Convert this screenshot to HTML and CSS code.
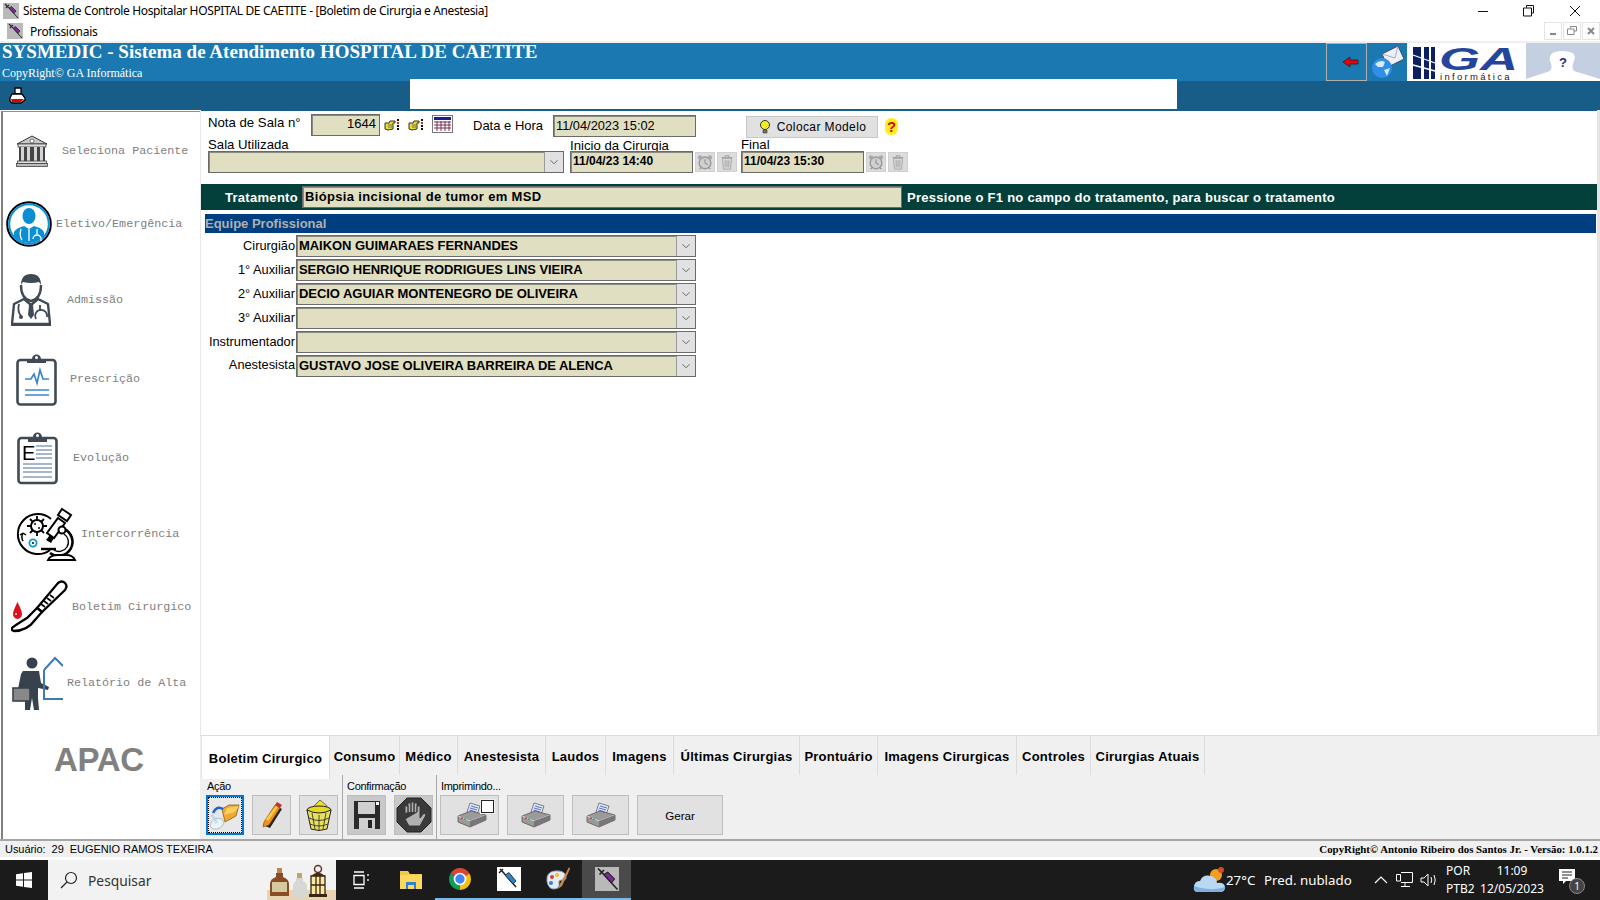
FILE: index.html
```html
<!DOCTYPE html>
<html lang="pt-BR">
<head>
<meta charset="utf-8">
<title>Sistema de Controle Hospitalar</title>
<link rel="stylesheet" href="styles.css">
</head>
<body>
<svg class="sprite" width="0" height="0">
  <defs>
    <symbol id="syringe" viewBox="0 0 16 16">
      <rect width="16" height="16" fill="#b9b9b9"/>
      <path d="M2 1 L5 4 M3 5 L6 2" stroke="#222" stroke-width="1.100" fill="none"/>
      <path d="M4 3 L15 15" stroke="#222" stroke-width="1"/>
      <path d="M6 5 L8.500 3.500 L13 8 L11 10.500 Z" fill="#7a2a8c" stroke="#222" stroke-width=".7"/>
    </symbol>
    <symbol id="hand" viewBox="0 0 17 14">
      <path d="M1 5 L5 5 L6 3 L11 3 L11 5 L9 5 L9 11 L4 12 L1 11 Z" fill="#e8dc30" stroke="#333" stroke-width="1"/>
      <path d="M4 7 H8 M4 9 H8" stroke="#555" stroke-width=".8"/>
      <rect x="13" y="1" width="2" height="2" fill="#111"/><rect x="13" y="4" width="2" height="2" fill="#d22"/>
      <rect x="13" y="7" width="2" height="2" fill="#111"/><rect x="13" y="10" width="2" height="2" fill="#111"/>
    </symbol>
    <symbol id="clock" viewBox="0 0 20 20">
      <circle cx="10" cy="11" r="6.500" fill="#d0d0d0" stroke="#9a9a9a" stroke-width="1.600"/>
      <circle cx="4.500" cy="5" r="2.400" fill="#a8a8a8"/><circle cx="15.500" cy="5" r="2.400" fill="#a8a8a8"/>
      <path d="M10 7 V11 L13 13 M4 18 L6 16 M16 18 L14 16" stroke="#8f8f8f" stroke-width="1.200" fill="none"/>
    </symbol>
    <symbol id="bin" viewBox="0 0 20 20">
      <path d="M4 5 H16 M8 5 V3 H12 V5" stroke="#a4a4a4" stroke-width="1.200" fill="none"/>
      <path d="M5 6 H15 L14 18 H6 Z" fill="#d8d8d8" stroke="#a4a4a4"/>
      <path d="M8 8 V16 M10 8 V16 M12 8 V16" stroke="#a4a4a4"/>
    </symbol>
    <symbol id="printer" viewBox="0 0 30 26">
      <path d="M13 1 L23 4 L20 13 L10 10 Z" fill="#dfe6fa" stroke="#666" stroke-width=".8"/>
      <path d="M14 4 L21 6 M13 6 L20 8 M12.500 8 L19 10" stroke="#5a6fd0" stroke-width="1"/>
      <path d="M1 14 L14 9 L29 13 L29 18 L13 25 L1 20 Z" fill="#9a9a9a" stroke="#555" stroke-width=".8"/>
      <path d="M1 14 L13 19 L29 13" stroke="#d2d2d2" fill="none"/>
      <path d="M13 19 V25 L29 18 V13 Z" fill="#777"/>
      <rect x="4" y="15.500" width="2" height="1.400" fill="#d33"/><rect x="7" y="16.500" width="2" height="1.400" fill="#2b2"/>
    </symbol>
    <symbol id="chev" viewBox="0 0 16 16">
      <path d="M4 6 L8 10 L12 6" stroke="#555" stroke-width="1" fill="none"/>
    </symbol>
  </defs>
</svg>

<div class="app">
  <div class="titlebar">
    <svg class="ic16"><use href="#syringe"/></svg>
    <span class="title-text">Sistema de Controle Hospitalar HOSPITAL DE CAETITE - [Boletim de Cirurgia e Anestesia]</span>
    <div class="winctl">
      <svg width="12" height="12" viewBox="0 0 12 12"><path d="M1 6.500 H11" stroke="#111"/></svg>
      <svg width="12" height="12" viewBox="0 0 12 12"><path d="M3.500 2.500 V.5 H10.500 V8 H8.500 M.5 3 H8.500 V11 H.5 Z" stroke="#111" fill="none"/></svg>
      <svg width="12" height="12" viewBox="0 0 12 12"><path d="M1 1 L11 11 M11 1 L1 11" stroke="#111"/></svg>
    </div>
  </div>
  <div class="menubar">
    <svg class="ic16"><use href="#syringe"/></svg>
    <span class="menu-text">Profissionais</span>
    <div class="mdictl">
      <span class="mdibtn"><svg width="10" height="10" viewBox="0 0 10 10"><path d="M2 8 H8" stroke="#888" stroke-width="2"/></svg></span>
      <span class="mdibtn"><svg width="10" height="10" viewBox="0 0 10 10"><path d="M3.500 2.500 V.5 H9.500 V5 H7 M.5 3 H7 V8.500 H.5 Z" stroke="#888" fill="none"/></svg></span>
      <span class="mdibtn"><svg width="10" height="10" viewBox="0 0 10 10"><path d="M2 2 L8 8 M8 2 L2 8" stroke="#888" stroke-width="2"/></svg></span>
    </div>
  </div>

  <header class="header">
    <div class="brand">
      <div class="brand-title">SYSMEDIC - Sistema de Atendimento HOSPITAL DE CAETITE</div>
      <div class="brand-sub">CopyRight© GA Informática</div>
    </div>
    <div class="backbtn">
      <svg width="18" height="12" viewBox="0 0 18 12"><path d="M1 6 L8 1 V4 H16 V8 H8 V11 Z" fill="#e8000c" stroke="#222" stroke-width=".8"/></svg>
    </div>
    <div class="mailbox">
      <svg width="34" height="34" viewBox="0 0 34 34">
        <path d="M11 9 L27 1 L33 14 L17 22 Z" fill="#eef0fa" stroke="#334" stroke-width=".8"/>
        <path d="M11 9 L24 13 L27 1" fill="none" stroke="#99a" stroke-width=".8"/>
        <circle cx="11" cy="23" r="10" fill="#2f8fe8"/>
        <path d="M4 19 Q9 14 14 17 L12 22 L7 22 Z M13 25 L19 23 L16 31 Z" fill="#d5ecff"/>
      </svg>
    </div>
    <div class="galogo">
      <svg width="119" height="38" viewBox="0 0 119 38">
        <path d="M6 4 H14 V36 H6 Z M17 4 H22 V36 H17 Z M24 4 H28 V36 H24 Z" fill="#0d1f63"/>
        <path d="M6 12 L28 20 M6 22 L28 28" stroke="#fff" stroke-width="1.300"/>
        <text class="ga-mark" transform="translate(32 27) scale(1.700 1)">GA</text>
        <text class="ga-inf" x="33" y="37">informática</text>
      </svg>
    </div>
    <div class="helpbox">
      <svg width="74" height="38" viewBox="0 0 74 38">
        <path d="M0 38 L0 36 L24 28 Q27 24 24 18 Q22 8 36 8 Q52 8 48 18 Q45 24 48 28 L74 36 V38 Z" fill="#fff"/>
        <text class="help-q" x="37" y="24">?</text>
      </svg>
    </div>
  </header>
  <div class="toolbar">
    <svg class="printer-red" width="18" height="18" viewBox="0 0 18 18">
      <path d="M6 1 H12 V7 H6 Z" fill="#fff" stroke="#000" stroke-width="1.300"/>
      <path d="M3 7 H13 L16 11 V13 L12 16 H3 L1 14 V11 Z" fill="#fff" stroke="#000" stroke-width="1.300"/>
      <path d="M2 12 H15 L12 15 H3 Z" fill="#e00000"/>
    </svg>
    <div class="whitebox"></div>
  </div>

  <div class="work">
    <nav class="sidebar">
      <a class="nav n1">
        <svg width="32" height="32" viewBox="0 0 32 32">
          <path d="M16 1 L31 9 H1 Z" fill="#c8c8c8" stroke="#333"/>
          <circle cx="16" cy="6" r="2" fill="#fff" stroke="#444" stroke-width=".7"/>
          <rect x="2" y="9" width="28" height="3" fill="#ddd" stroke="#444" stroke-width=".8"/>
          <rect x="3" y="12" width="26" height="14" fill="#444"/>
          <path d="M5 12 H8 V26 H5 Z M11 12 H14 V26 H11 Z M18 12 H21 V26 H18 Z M24 12 H27 V26 H24 Z" fill="#d4d4d4"/>
          <rect x="1.500" y="26" width="29" height="2.500" fill="#ddd" stroke="#444" stroke-width=".8"/>
          <rect x=".5" y="28.500" width="31" height="3" fill="#bbb" stroke="#444" stroke-width=".8"/>
        </svg>
        <span>Seleciona Paciente</span>
      </a>
      <a class="nav n2">
        <svg width="46" height="46" viewBox="0 0 46 46">
          <defs><clipPath id="dc"><circle cx="23" cy="23" r="19"/></clipPath></defs>
          <circle cx="23" cy="23" r="21.800" fill="#fff" stroke="#000" stroke-width="2"/>
          <circle cx="23" cy="23" r="19.800" fill="none" stroke="#0a8fd4" stroke-width="2"/>
          <ellipse cx="23" cy="15" rx="6.500" ry="8" fill="#0a8fd4"/>
          <path d="M8 46 V31 Q10 27 18 25 L23 28 L28 25 Q36 27 38 31 V46 Z" fill="#0a8fd4" clip-path="url(#dc)"/>
          <path d="M15 28 Q13 35 16 39 M31 28 V33 M27 38 A4 4 0 1 1 35 38 V40 M23 28 V40" stroke="#fff" stroke-width="1.300" fill="none"/>
        </svg>
        <span>Eletivo/Emergência</span>
      </a>
      <a class="nav n3">
        <svg width="40" height="54" viewBox="0 0 40 54">
          <path d="M10 12 Q10 1 20 1 Q30 1 30 12 L28 9 Q20 11 12 9 Z" fill="#3f4a55"/>
          <path d="M10 12 Q10 26 20 28 Q30 26 30 12" fill="#fff" stroke="#3f4a55" stroke-width="2.400"/>
          <path d="M13 26 L3 31 L1 51 H39 L37 31 L27 26 L20 32 Z" fill="#fff" stroke="#3f4a55" stroke-width="2.400" stroke-linejoin="round"/>
          <path d="M18 32 H22 L23 42 L20 46 L17 42 Z" fill="#3f4a55"/>
          <path d="M8 31 Q6 38 10 43 M29 32 V38 M25 46 A6 6 0 1 1 36 44" fill="none" stroke="#3f4a55" stroke-width="1.800"/>
          <circle cx="10" cy="44" r="2" fill="#3f4a55"/>
          <rect y="50" width="40" height="3" fill="#3f4a55"/>
        </svg>
        <span>Admissão</span>
      </a>
      <a class="nav n4">
        <svg width="41" height="53" viewBox="0 0 41 53">
          <rect x="1.500" y="7" width="38" height="44.500" rx="3" fill="#fff" stroke="#3f4a55" stroke-width="2.600"/>
          <path d="M11 10 V6 H16 A4.500 4.500 0 0 1 25 6 H30 V10 Z" fill="#3f4a55"/>
          <circle cx="20.500" cy="4.500" r="1.500" fill="#fff"/>
          <path d="M9 26 H15 L18 21 L21 30 L24 17 L27 26 H33" fill="none" stroke="#3f86c6" stroke-width="1.700"/>
          <path d="M9 37 H33 M9 42 H33" stroke="#3f86c6" stroke-width="1.600"/>
        </svg>
        <span>Prescrição</span>
      </a>
      <a class="nav n5">
        <svg width="41" height="54" viewBox="0 0 41 54">
          <rect x="1.500" y="7" width="38" height="45" rx="3" fill="#fff" stroke="#3f4a55" stroke-width="2.600"/>
          <path d="M11 11 V6 H16 A4.500 4.500 0 0 1 25 6 H30 V11 Z" fill="#3f4a55"/>
          <text class="eye-e" x="5" y="29">E</text>
          <circle cx="20.500" cy="4.500" r="1.500" fill="#fff"/>
          <path d="M19 15 H35 M19 19 H35 M19 23 H35 M19 27 H35 M6 33 H35 M6 37 H35 M6 41 H35 M6 46 H35" stroke="#4a6e96" stroke-width="1"/>
        </svg>
        <span>Evolução</span>
      </a>
      <a class="nav n6">
        <svg width="61" height="54" viewBox="0 0 61 54">
          <path d="M34 43 A20 20 0 1 1 35 12" fill="#fff" stroke="#000" stroke-width="2"/>
          <path d="M21 9 V29 M11 19 H31 M14 12 L28 26 M28 12 L14 26" stroke="#000" stroke-width="1.800"/>
          <circle cx="21" cy="19" r="6" fill="#fff" stroke="#000" stroke-width="2"/>
          <circle cx="19" cy="17" r="1" fill="#000"/><circle cx="23" cy="21" r="1" fill="#000"/>
          <path d="M7 34 A8 8 0 0 1 7 26 M7 26 L4 28 M7 26 L10 28" fill="none" stroke="#000" stroke-width="1.500"/>
          <circle cx="17" cy="36" r="3.600" fill="#fff" stroke="#0a9ad8" stroke-width="1.800"/>
          <circle cx="17" cy="36" r="1" fill="#000"/>
          <path d="M48 22 A14 14 0 1 1 34 46" fill="none" stroke="#000" stroke-width="2.600"/>
          <path d="M48 27 A9 9 0 1 1 38 43" fill="none" stroke="#000" stroke-width="1.400"/>
          <path d="M46 2 L55 8 L51 14 L42 8 Z" fill="#fff" stroke="#000" stroke-width="2"/>
          <path d="M42 11 L49 16 L38 31 L31 26 Z" fill="#fff" stroke="#000" stroke-width="2"/>
          <path d="M34 28 L30 33 L35 36 L38 31" fill="#000"/>
          <circle cx="46" cy="23" r="3.500" fill="#fff" stroke="#000" stroke-width="2"/>
          <path d="M25 42 H40" stroke="#000" stroke-width="2.400"/>
          <path d="M32 53 Q34 48 42 48 H50 Q57 48 59 53 Z" fill="#fff" stroke="#000" stroke-width="2"/>
        </svg>
        <span>Intercorrência</span>
      </a>
      <a class="nav n7">
        <svg width="57" height="55" viewBox="0 0 57 55">
          <path d="M47 3 Q51 0 54 3 Q57 6 54 10 L31 32 L26 28 Z" fill="#fff" stroke="#000" stroke-width="2.300"/>
          <path d="M26 28 L31 32 L24 40 Q16 51 3 51 Q0 50 1 48 Q3 46 16 38 Z" fill="#fff" stroke="#000" stroke-width="2.300"/>
          <path d="M30 24 L34 27 M33 21 L37 24 M36 18 L40 21 M39 15 L43 18" stroke="#000" stroke-width="1.600"/>
          <path d="M6.500 22 Q11 31 11 34 A4.500 5 0 0 1 2 34 Q2 31 6.500 22 Z" fill="#e0101a"/>
          <circle cx="5" cy="34" r="1" fill="#fff"/>
        </svg>
        <span>Boletim Cirurgico</span>
      </a>
      <a class="nav n8">
        <svg width="51" height="55" viewBox="0 0 51 55">
          <circle cx="20" cy="7" r="5.500" fill="#38424e"/>
          <path d="M11 15 L27 15 L29 27 L37 31 L36 34 L26 32 L26 42 L27 54 L22 54 L20 42 L18 54 L13 54 L13 42 L8 32 L6 33 L9 18 Z" fill="#38424e"/>
          <rect x="1" y="32" width="17" height="13" fill="#888" stroke="#38424e" stroke-width="1.600"/>
          <path d="M32 14 L43 2 L51 10 M32 14 V43 H51" fill="none" stroke="#3a7abd" stroke-width="2"/>
          <rect x="48" y="42" width="2" height="2" fill="#1a9a3a"/>
        </svg>
        <span>Relatório de Alta</span>
      </a>
      <a class="nav apac">APAC</a>
    </nav>

    <div class="content">
      <main class="panel">
        <section class="form-top">
          <div class="row-one">
            <span class="lbl nota-lbl">Nota de Sala n°</span>
            <div class="field nota-num">1644</div>
            <svg class="hand-a" width="17" height="14"><use href="#hand"/></svg>
            <svg class="hand-b" width="17" height="14"><use href="#hand"/></svg>
            <svg class="calendar" width="21" height="18" viewBox="0 0 21 18">
              <rect x=".5" y=".5" width="20" height="17" fill="#fff" stroke="#777"/>
              <rect x="2" y="2" width="17" height="3" fill="#1a1a9a"/>
              <path d="M2 7 H19 M2 10 H19 M2 13 H19 M5 6 V16 M9 6 V16 M13 6 V16 M17 6 V16" stroke="#702040" stroke-width=".9"/>
            </svg>
            <span class="lbl data-lbl">Data e Hora</span>
            <div class="field data-val">11/04/2023 15:02</div>
            <button class="modelo" type="button">
              <svg width="14" height="16" viewBox="0 0 14 16">
                <circle cx="7" cy="6" r="4.500" fill="#f2ee20" stroke="#333"/>
                <path d="M5 11 H9 V14 H5 Z" fill="#777" stroke="#333" stroke-width=".6"/>
              </svg>
              <span>Colocar Modelo</span>
            </button>
            <span class="qmark">?</span>
          </div>
          <div class="row-two">
            <div class="col col-sala">
              <span class="lbl">Sala Utilizada</span>
              <div class="field combo"><svg class="chev"><use href="#chev"/></svg></div>
            </div>
            <div class="col col-time">
              <span class="lbl lbl-low">Inicio da Cirurgia</span>
              <div class="time-line">
                <div class="field time-val">11/04/23 14:40</div>
                <span class="mini"><svg width="18" height="18"><use href="#clock"/></svg></span>
                <span class="mini"><svg width="18" height="18"><use href="#bin"/></svg></span>
              </div>
            </div>
            <div class="col col-time">
              <span class="lbl">Final</span>
              <div class="time-line">
                <div class="field time-val">11/04/23 15:30</div>
                <span class="mini"><svg width="18" height="18"><use href="#clock"/></svg></span>
                <span class="mini"><svg width="18" height="18"><use href="#bin"/></svg></span>
              </div>
            </div>
          </div>
        </section>

        <section class="treat">
          <span class="treat-lbl">Tratamento</span>
          <div class="field treat-val">Biópsia incisional de tumor em MSD</div>
          <span class="treat-hint">Pressione o F1 no campo do tratamento, para buscar o tratamento</span>
        </section>

        <div class="team-head">Equipe Profissional</div>
        <section class="team">
          <span class="lbl">Cirurgião</span>
          <div class="field combo combo-b">MAIKON GUIMARAES FERNANDES<svg class="chev"><use href="#chev"/></svg></div>
          <span class="lbl">1° Auxiliar</span>
          <div class="field combo combo-b">SERGIO HENRIQUE RODRIGUES LINS VIEIRA<svg class="chev"><use href="#chev"/></svg></div>
          <span class="lbl">2° Auxiliar</span>
          <div class="field combo combo-b">DECIO AGUIAR MONTENEGRO DE OLIVEIRA<svg class="chev"><use href="#chev"/></svg></div>
          <span class="lbl">3° Auxiliar</span>
          <div class="field combo combo-b"><svg class="chev"><use href="#chev"/></svg></div>
          <span class="lbl">Instrumentador</span>
          <div class="field combo combo-b"><svg class="chev"><use href="#chev"/></svg></div>
          <span class="lbl lbl-raise">Anestesista</span>
          <div class="field combo combo-b">GUSTAVO JOSE OLIVEIRA BARREIRA DE ALENCA<svg class="chev"><use href="#chev"/></svg></div>
        </section>
      </main>

      <div class="tabs">
        <span class="tab active">Boletim Cirurgico</span>
        <span class="tab t2">Consumo</span>
        <span class="tab t3">Médico</span>
        <span class="tab t4">Anestesista</span>
        <span class="tab t5">Laudos</span>
        <span class="tab t6">Imagens</span>
        <span class="tab t7">Últimas Cirurgias</span>
        <span class="tab t8">Prontuário</span>
        <span class="tab t9">Imagens Cirurgicas</span>
        <span class="tab t10">Controles</span>
        <span class="tab t11">Cirurgias Atuais</span>
      </div>

      <div class="actions">
        <div class="group g1">
          <span class="glabel">Ação</span>
          <div class="gbtns">
            <button class="act focus" type="button">
              <svg width="32" height="32" viewBox="0 0 32 32">
                <path d="M13 10 L20 6 L30 6 L27 17 L16 23 Z" fill="#f0a830" stroke="#8a5a10" stroke-width=".8"/>
                <path d="M18 9 L30 7 L26 13 L15 16 Z" fill="#f8d060"/>
                <path d="M4 14 Q8 6 14 10" fill="none" stroke="#2060d0" stroke-width="2.500"/>
                <path d="M1 27 Q3 17 13 20 L15 24 Q12 31 4 30 Z" fill="#e8f4f8" stroke="#999" stroke-width=".6"/>
                <path d="M3 16 L8 24" stroke="#9ad0f0" stroke-width="3" stroke-dasharray="1 1"/>
              </svg>
            </button>
            <button class="act" type="button">
              <svg width="30" height="30" viewBox="0 0 30 30">
                <path d="M6 25 L19 6 L25 9 L13 28 Z" fill="#222"/>
                <path d="M7 22 L18 5 L23 8 L12 25 L6 27 Z" fill="#f09020" stroke="#8a4a00" stroke-width=".6"/>
                <path d="M9 19 L19 6 L21 7 L11 21 Z" fill="#f8d040"/>
                <path d="M18 5 L20 2 L25 5 L23 8 Z" fill="#c03040"/>
              </svg>
            </button>
            <button class="act" type="button">
              <svg width="32" height="34" viewBox="0 0 32 34">
                <path d="M9 10 L17 2 L24 8 L22 13 Z" fill="#f0e030" stroke="#333" stroke-width=".7"/>
                <ellipse cx="16" cy="12" rx="12" ry="4" fill="#e8d820" stroke="#222"/>
                <path d="M4 12 L8 31 Q16 34 24 31 L28 12 Q16 18 4 12 Z" fill="#e8e060" stroke="#222"/>
                <path d="M9 15 L12 31 M16 17 V32 M23 15 L20 31 M6 20 Q16 25 26 20 M7 26 Q16 30 25 26" stroke="#222" stroke-width=".8" fill="none"/>
              </svg>
            </button>
          </div>
        </div>
        <div class="group g2">
          <span class="glabel">Confirmação</span>
          <div class="gbtns">
            <button class="act dark" type="button">
              <svg width="28" height="30" viewBox="0 0 28 30">
                <rect x="1" y="1" width="26" height="28" fill="#2a2a2a"/>
                <rect x="5" y="2" width="17" height="12" fill="#cfcfcf"/>
                <rect x="23" y="2" width="3" height="3" fill="#fff"/>
                <rect x="6" y="18" width="16" height="11" fill="#cfcfcf"/>
                <rect x="15" y="20" width="4" height="8" fill="#222"/>
              </svg>
            </button>
            <button class="act dark" type="button">
              <svg width="36" height="36" viewBox="0 0 36 36">
                <path d="M11 1 H25 L35 11 V25 L25 35 H11 L1 25 V11 Z" fill="#3a3a3a" stroke="#222"/>
                <path d="M9 16 V9 H12 V15 M12 15 V6 H15 V15 M15 15 V5 H18 V15 M18 15 V6 H21 V15 M21 15 V9 H24 V21 L28 16 L30 18 L24 29 H13 L9 22 Z" fill="#b0b0b0" stroke="#333" stroke-width=".9"/>
              </svg>
            </button>
          </div>
        </div>
        <div class="group g3">
          <span class="glabel">Imprimindo...</span>
          <div class="gbtns">
            <button class="act print first" type="button">
              <svg width="30" height="26"><use href="#printer"/></svg>
              <span class="print-check"></span>
            </button>
            <button class="act print" type="button"><svg width="30" height="26"><use href="#printer"/></svg></button>
            <button class="act print" type="button"><svg width="30" height="26"><use href="#printer"/></svg></button>
            <button class="act gerar" type="button">Gerar</button>
          </div>
        </div>
      </div>
    </div>
  </div>

  <footer class="status">
    <span class="status-user">Usuário:&nbsp; 29&nbsp; EUGENIO RAMOS TEXEIRA</span>
    <span class="status-copy">CopyRight© Antonio Ribeiro dos Santos Jr. - Versão: 1.0.1.2</span>
  </footer>

  <div class="taskbar">
    <div class="start">
      <svg width="16" height="16" viewBox="0 0 16 16"><path d="M0 2.200 L7 1.200 V7.500 H0 Z M8 1 L16 0 V7.500 H8 Z M0 8.500 H7 V14.800 L0 13.800 Z M8 8.500 H16 V16 L8 15 Z" fill="#fff"/></svg>
    </div>
    <div class="search">
      <svg width="20" height="20" viewBox="0 0 20 20"><circle cx="12" cy="8" r="5.500" fill="none" stroke="#222" stroke-width="1.200"/><path d="M8 12 L2 18" stroke="#222" stroke-width="1.200"/></svg>
      <span class="search-text">Pesquisar</span>
      <svg class="search-art" width="69" height="37" viewBox="0 0 69 37">
        <rect y="27" width="69" height="10" fill="#e6d4b2"/>
        <rect x="10" y="5" width="5" height="5" fill="#b88a50"/>
        <path d="M9 10 H16 V14 Q22 16 22 21 V33 H3 V21 Q3 16 9 14 Z" fill="#8a4c24"/>
        <rect x="5" y="19" width="15" height="10" fill="#d8c8a0"/>
        <rect x="30" y="10" width="5" height="5" fill="#c8a060"/>
        <path d="M29 15 H36 V18 Q40 20 40 23 V34 H26 V23 Q26 20 29 18 Z" fill="#d6d8d6"/>
        <circle cx="51" cy="6" r="3.500" fill="none" stroke="#5a3a20" stroke-width="1.500"/>
        <path d="M44 13 Q51 6 58 13 Z" fill="#4a2e18"/>
        <rect x="44" y="13" width="14" height="19" fill="#f8e8a0"/>
        <path d="M44 13 H58 V32 H44 Z M49 13 V32 M53 13 V32 M44 22 H58" fill="none" stroke="#3a2412" stroke-width="1.300"/>
        <rect x="42" y="31" width="18" height="3" fill="#3a2412"/>
      </svg>
    </div>
    <div class="tasks">
      <span class="task"><svg width="20" height="20" viewBox="0 0 20 20"><path d="M2 2 H12 M2 18 H12 M2 5.500 H12 V14.500 H2 Z M16 4 V6 M16 9 V11" stroke="#fff" stroke-width="1.300" fill="none"/></svg></span>
      <span class="task"><svg width="24" height="22" viewBox="0 0 24 22"><path d="M1 2 H9 L11 5 H23 V20 H1 Z" fill="#f3c84a"/><rect x="1" y="6" width="22" height="14" fill="#fcd95e"/><rect x="7" y="13" width="10" height="7" fill="#2f80d8"/><rect x="9" y="16" width="6" height="4" fill="#fcd95e"/></svg></span>
      <span class="task on"><svg width="24" height="24" viewBox="0 0 24 24"><path d="M12 12 L2.500 6.500 A11 11 0 0 1 21.500 6.500 Z" fill="#db4437"/><path d="M12 12 L21.500 6.500 A11 11 0 0 1 12 23 Z" fill="#f4c20d"/><path d="M12 12 L12 23 A11 11 0 0 1 2.500 6.500 Z" fill="#0f9d58"/><circle cx="12" cy="12" r="5.500" fill="#4285f4" stroke="#fff" stroke-width="1.700"/></svg></span>
      <span class="task on"><svg width="24" height="24" viewBox="0 0 24 24"><rect width="24" height="24" fill="#fff"/><path d="M3 2 L7 6 M2 6 L6 2 M5 4 L19 20" stroke="#222" stroke-width="1.500"/><path d="M8 8 L12 5.500 L19 14 L16 17 Z" fill="#2a82c8" stroke="#222" stroke-width=".8"/></svg></span>
      <span class="task on"><svg width="26" height="26" viewBox="0 0 26 26"><path d="M2 15 Q1 6 10 5 Q20 4 21 11 Q21 15 16 14 Q13 14 14 18 Q15 23 8 23 Q3 22 2 15 Z" fill="#e4ecf4" stroke="#9ab"/><circle cx="7" cy="11" r="2" fill="#e03c30"/><circle cx="12" cy="9" r="2" fill="#f0c020"/><circle cx="6" cy="17" r="2" fill="#3080e0"/><path d="M24 1 L15 18 L13 23 L17 20 L25 3 Z" fill="#c9864a"/></svg></span>
      <span class="task on cur"><svg width="24" height="24"><use href="#syringe"/></svg></span>
    </div>
    <div class="tray">
      <svg class="wx" width="34" height="28" viewBox="0 0 34 28"><circle cx="23" cy="9" r="6" fill="#f0a020"/><circle cx="28" cy="4" r="3" fill="#d84a20"/><path d="M5 26 Q0 26 1 20 Q2 15 7 15 Q10 8 18 10 Q24 12 24 17 Q31 16 32 21 Q32 26 27 26 Z" fill="#b8d8f4"/><path d="M1 20 Q16 26 32 21 Q32 26 27 26 H5 Q0 26 1 20 Z" fill="#7fb0de"/></svg>
      <span class="tray-temp">27°C</span>
      <span class="tray-wx">Pred. nublado</span>
      <svg class="tray-chev" width="14" height="8" viewBox="0 0 14 8"><path d="M1 7 L7 1 L13 7" stroke="#fff" fill="none" stroke-width="1.200"/></svg>
      <svg class="tray-net" width="17" height="16" viewBox="0 0 17 16"><path d="M5 .5 H16.500 V10.500 H5 M.5 2.500 H4.500 V9 H.5 Z M9 10.500 V14 M5 14.500 H14" stroke="#fff" fill="none"/></svg>
      <svg class="tray-vol" width="17" height="16" viewBox="0 0 17 16"><path d="M1 6 H4 L8 2 V14 L4 10 H1 Z" stroke="#fff" fill="none"/><path d="M11 5 Q12.500 8 11 11 M14 3 Q16.500 8 14 13" stroke="#fff" fill="none"/></svg>
      <div class="lang"><span>POR</span><span>PTB2</span></div>
      <div class="clock"><span>11:09</span><span>12/05/2023</span></div>
      <div class="notif">
        <svg width="28" height="26" viewBox="0 0 28 26"><path d="M1 2 H17 V14 H8 L5 17 V14 H1 Z" fill="#fff"/><path d="M4 5 H14 M4 8 H14 M4 11 H10" stroke="#222"/></svg>
        <span class="notif-badge">1</span>
      </div>
    </div>
  </div>
</div>
</body>
</html>
```

FILE: styles.css
```css
* { box-sizing: border-box; }
html, body { margin: 0; padding: 0; height: 100%; overflow: hidden; background: #fff; }
body { font-family: "Liberation Sans", Arial, sans-serif; color: #000; }
.sprite { position: absolute; }
svg { display: block; flex: none; }
.app { width: 1600px; height: 900px; display: flex; flex-direction: column; overflow: hidden; }

/* window chrome */
.titlebar { height: 21px; display: flex; align-items: center; padding: 1px 0 0 3px; background: #fff; }
.ic16 { width: 16px; height: 16px; }
.title-text { margin-left: 4px; font: 12px/20px "Noto Sans", sans-serif; letter-spacing: -.36px; white-space: nowrap; }
.winctl { margin-left: auto; display: flex; gap: 34px; padding-right: 19px; }
.menubar { height: 20px; display: flex; align-items: center; padding-left: 7px; background: #fff; }
.menu-text { margin-left: 7px; padding-top: 2px; font: 12px/18px "Noto Sans", sans-serif; letter-spacing: -.3px; }
.mdictl { margin-left: auto; display: flex; gap: 1px; }
.mdibtn { width: 18px; height: 18px; border: 1px solid #e4e4e4; display: flex; align-items: center; justify-content: center; }

/* header */
.header { margin-top: 2px; height: 38px; background: #1c78b0; display: flex; box-shadow: 0 -2px 0 #f0f0f0; }
.brand { flex: 1; color: #fff; padding-left: 2px; font-family: "Liberation Serif", serif; }
.brand-title { font-size: 19px; font-weight: 700; line-height: 17px; letter-spacing: .02px; white-space: nowrap; }
.brand-sub { font-size: 12px; line-height: 14px; margin-top: 6px; }
.backbtn { width: 41px; border: 1px solid #b0b0b0; display: flex; align-items: center; justify-content: center; padding-left: 8px; }
.mailbox { width: 40px; display: flex; align-items: center; padding-left: 4px; }
.galogo { width: 119px; background: #fff; }
.ga-mark { font: italic 700 31px "Liberation Sans", sans-serif; fill: #23469c; }
.ga-inf { font: 9.5px "Liberation Sans", sans-serif; fill: #222; letter-spacing: 2.3px; }
.helpbox { width: 74px; background: #c5cfe2; }
.help-q { font: 700 13px "Liberation Sans", sans-serif; fill: #1c2a8c; text-anchor: middle; }
.toolbar { height: 29px; background: #185c88; display: flex; align-items: flex-start; }
.printer-red { margin: 6px 0 0 9px; }
.whitebox { margin: -2px 0 0 383px; width: 767px; height: 30px; background: #fff; }

/* work area */
.work { height: 731px; display: flex; border-bottom: 2px solid #a6a6a6; padding-top: 1px; }
.sidebar { width: 199px; flex: none; border-left: 2px solid #808080; border-top: 1px solid #909090; margin-left: 1px; display: flex; flex-direction: column; background: #fff; }
.nav { height: 60px; display: flex; align-items: center; color: #808080; font: 11.7px "Liberation Mono", monospace; white-space: nowrap; }
.n1 { margin-top: 9px; padding-left: 13px; gap: 14px; }
.n2 { margin-top: 13px; padding-left: 3px; gap: 4px; }
.n3 { margin-top: 16px; padding-left: 8px; gap: 16px; }
.n4 { margin-top: 19px; padding-left: 13px; gap: 13px; }
.n5 { margin-top: 19px; padding-left: 14px; gap: 15px; }
.n6 { margin-top: 16px; padding-left: 13px; gap: 4px; }
.n7 { margin-top: 13px; padding-left: 8px; gap: 4px; }
.n8 { margin-top: 16px; padding-left: 9px; gap: 4px; }
.apac { margin-top: 17px; padding-left: 51px; font: 700 33px "Liberation Sans", sans-serif; letter-spacing: -.3px; }
.eye-e { font: 20px "Liberation Sans", sans-serif; fill: #000; }

.content { flex: 1; display: flex; flex-direction: column; min-width: 0; }
.panel { height: 626px; background: #fff; border-right: 3px solid #e4e4e4; border-bottom: 1px solid #dcdcdc; border-left: 1px solid #e8e8e8; margin-top: -1px; box-shadow: inset 0 1px 0 #185c88; }

.lbl { font-size: 13.2px; line-height: 14px; white-space: nowrap; }
.field { background: #e0dfc1; border: 1px solid #6a6a6a; box-shadow: inset 1px 1px 0 #8a8a80; font-size: 13px; white-space: nowrap; position: relative; }
.form-top { height: 74px; display: flex; flex-direction: column; padding-left: 6px; }
.row-one { display: flex; align-items: center; height: 22px; margin-top: 4px; }
.nota-lbl { width: 103px; margin-left: 1px; margin-top: -4px; }
.nota-num { width: 69px; height: 22px; line-height: 18px; text-align: right; padding-right: 3px; font-size: 13px; }
.hand-a { margin-left: 4px; }
.hand-b { margin-left: 7px; }
.calendar { margin-left: 7px; margin-top: -3px; }
.data-lbl { margin-left: 20px; width: 80px; font-size: 13px; margin-top: 1px; }
.data-val { width: 143px; height: 22px; line-height: 20px; padding-left: 2px; font-size: 12.8px; margin-top: 2px; }
.modelo { margin-left: 50px; margin-top: 3px; width: 132px; height: 22px; background: #e1e1e1; border: 1px solid #c8c8c8; display: flex; align-items: center; justify-content: center; gap: 5px; font: 12px "Liberation Sans", sans-serif; letter-spacing: .4px; padding: 0; }
.qmark { margin-left: 7px; margin-top: 2px; width: 13px; height: 17px; border-radius: 6px; background: #ffee20; color: #e00000; font: 700 15px/17px "Liberation Sans", sans-serif; text-align: center; }
.row-two { display: flex; margin-top: 2px; }
.col { display: flex; flex-direction: column; }
.col .lbl { height: 13px; }
.col .lbl-low { padding-top: 1px; }
.col-sala { width: 363px; padding-left: 1px; }
.col-sala .combo { width: 356px; }
.col-time { width: 171px; }
.combo { height: 22px; padding: 0 20px 0 2px; line-height: 20px; }
.chev { position: absolute; right: 0; top: 0; width: 19px; height: 20px; background: #e1e1e1; border-left: 1px solid #9a9a9a; padding: 2px; }
.time-line { display: flex; align-items: center; gap: 2px; }
.time-val { width: 123px; height: 22px; line-height: 19px; padding-left: 2px; font-size: 12px; font-weight: 700; }
.mini { width: 20px; height: 20px; background: #dcdcdc; border: 1px solid #d0d0d0; display: flex; align-items: center; justify-content: center; }

.treat { height: 26px; background: #04403b; display: flex; align-items: center; }
.treat-lbl { width: 97px; text-align: right; color: #fff; font-size: 13px; font-weight: 700; letter-spacing: .3px; }
.treat-val { margin-left: 4px; width: 600px; height: 22px; line-height: 20px; padding-left: 2px; font-size: 13px; font-weight: 700; letter-spacing: .35px; }
.treat-hint { margin-left: 5px; color: #fff; font-size: 13px; font-weight: 700; letter-spacing: .27px; white-space: nowrap; }
.team-head { margin: 4px 0 0 4px; width: 1391px; height: 19px; background: #003f7f; color: #b0b0b0; font-size: 13px; font-weight: 700; line-height: 19px; }
.team { display: grid; grid-template-columns: 90px 400px; column-gap: 1px; row-gap: 2px; grid-auto-rows: 22px; margin: 2px 0 0 4px; align-items: center; }
.team .lbl { text-align: right; font-size: 12.8px; }
.team .lbl-raise { margin-top: -3px; }
.combo-b { font-size: 13px; font-weight: 700; letter-spacing: -.05px; }

/* tabs */
.tabs { height: 39px; display: flex; background: #f0f0f0; position: relative; }
.tab { display: flex; align-items: center; justify-content: center; padding-top: 2px; font-size: 13px; font-weight: 700; letter-spacing: .25px; white-space: nowrap; border-right: 1px solid #dcdcdc; }
.tab.active { width: 129px; height: 43px; background: #fff; margin-left: 1px; position: relative; border-left: 1px solid #e4e4e4; }
.t2 { width: 70px; } .t3 { width: 58px; } .t4 { width: 88px; } .t5 { width: 60px; } .t6 { width: 68px; }
.t7 { width: 126px; } .t8 { width: 78px; } .t9 { width: 139px; } .t10 { width: 74px; } .t11 { width: 114px; }

.actions { flex: 1; display: flex; background: #f0f0f0; }
.group { display: flex; flex-direction: column; border-right: 1px solid #a8a8a8; padding-left: 6px; }
.g1 { width: 143px; }
.g2 { width: 94px; padding-left: 3px; }
.g3 { border-right: 0; padding-left: 3px; }
.glabel { height: 20px; font-size: 11px; letter-spacing: -.3px; line-height: 23px; padding-left: 1px; white-space: nowrap; }
.gbtns { display: flex; gap: 8px; }
.act { width: 39px; height: 40px; padding: 0; background: #e1e1e1; border: 1px solid #bdbdbd; display: flex; align-items: center; justify-content: center; position: relative; font: 11.6px "Liberation Sans", sans-serif; }
.focus { width: 38px; border: 2px solid #0078d7; outline: 1px dotted #000; outline-offset: -3px; background: #e8e8e8; }
.dark { background: #c8c8c8; }
.g2 .gbtns { padding-left: 1px; }
.print { width: 57px; }
.first { width: 59px; justify-content: flex-start; padding-left: 16px; }
.print-check { position: absolute; right: 4px; top: 4px; width: 13px; height: 13px; background: #fff; border: 1px solid #222; box-shadow: 0 0 0 1px #eee; }
.gerar { width: 86px; }

/* status */
.status { height: 16px; background: #f0f0f0; display: flex; justify-content: space-between; align-items: center; padding: 0 2px 0 5px; }
.status-user { font-size: 11px; letter-spacing: -.05px; white-space: nowrap; }
.status-copy { font: 700 10.85px "Liberation Serif", serif; white-space: nowrap; }

/* taskbar */
.taskbar { margin-top: 3px; height: 40px; background: #1b1b1b; display: flex; align-items: center; color: #fff; font-family: "Noto Sans", sans-serif; }
.start { width: 48px; display: flex; justify-content: center; }
.search { width: 288px; height: 40px; background: #f2f2f2; display: flex; align-items: center; padding-left: 11px; color: #333; position: relative; }
.search-text { margin-left: 9px; font-size: 13.8px; }
.search-art { margin-left: auto; align-self: flex-end; }
.tasks { display: flex; padding-left: 1px; height: 40px; }
.task { width: 49px; height: 40px; display: flex; align-items: center; justify-content: center; }
.task.on { border-bottom: 2px solid #76b9ed; box-shadow: inset 4px 0 0 #1b1b1b, inset -4px 0 0 #1b1b1b; }
.task.cur { background: #4a4a4a; box-shadow: none; }
.tray { flex: 1; display: flex; align-items: center; height: 40px; padding-left: 562px; position: relative; }
.tray-temp { margin-left: -1px; font-size: 13.3px; width: 38px; white-space: nowrap; }
.tray-wx { font-size: 13.3px; width: 110px; white-space: nowrap; }
.tray-chev { width: 14px; }
.tray-net { margin-left: 8px; }
.tray-vol { margin-left: 7px; }
.lang { margin-left: 9px; width: 36px; display: flex; flex-direction: column; font-size: 12px; line-height: 18px; }
.clock { width: 60px; display: flex; flex-direction: column; align-items: center; font-size: 12px; line-height: 18px; white-space: nowrap; }
.notif { margin-left: 16px; position: relative; }
.notif-badge { position: absolute; left: 11px; top: 11px; width: 16px; height: 16px; border-radius: 50%; border: 1px solid #888; background: #444; font-size: 10px; line-height: 14px; text-align: center; }
```
